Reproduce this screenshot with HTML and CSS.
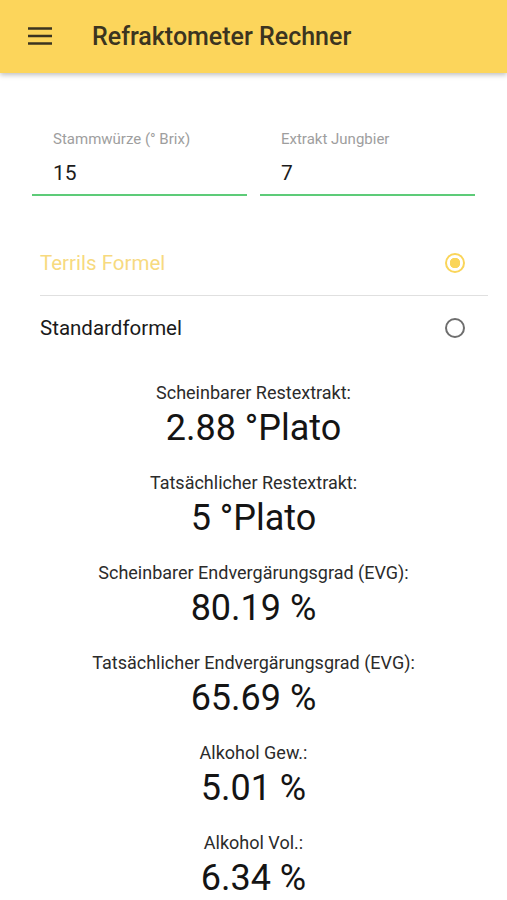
FILE: index.html
```html
<!DOCTYPE html>
<html lang="de">
<head>
    <meta charset="utf-8">
    <title>Refraktometer Rechner</title>
    <link rel="stylesheet" href="styles.css">
</head>
<body>
    <header class="toolbar">
        <svg class="menuIcon" width="24" height="24" viewBox="0 0 24 24">
            <path d="M0 4.5h24M0 12h24M0 19.5h24" stroke="#3b3420" stroke-width="2.6"/>
        </svg>
        <h1>Refraktometer Rechner</h1>
    </header>

    <main>
        <div class="inputs">
            <label class="field">
                <span class="fieldLabel">Stammwürze (° Brix)</span>
                <span class="fieldValue">15</span>
            </label>
            <label class="field">
                <span class="fieldLabel">Extrakt Jungbier</span>
                <span class="fieldValue">7</span>
            </label>
        </div>

        <ul class="formulas">
            <li class="formula checked">
                <span>Terrils Formel</span>
                <span class="radio"></span>
            </li>
            <li class="formula">
                <span>Standardformel</span>
                <span class="radio"></span>
            </li>
        </ul>

        <section class="results">
            <div class="result">
                <p class="resultLabel">Scheinbarer Restextrakt:</p>
                <p class="resultValue">2.88 °Plato</p>
            </div>
            <div class="result">
                <p class="resultLabel">Tatsächlicher Restextrakt:</p>
                <p class="resultValue">5 °Plato</p>
            </div>
            <div class="result">
                <p class="resultLabel">Scheinbarer Endvergärungsgrad (EVG):</p>
                <p class="resultValue">80.19 %</p>
            </div>
            <div class="result">
                <p class="resultLabel">Tatsächlicher Endvergärungsgrad (EVG):</p>
                <p class="resultValue">65.69 %</p>
            </div>
            <div class="result">
                <p class="resultLabel">Alkohol Gew.:</p>
                <p class="resultValue">5.01 %</p>
            </div>
            <div class="result">
                <p class="resultLabel">Alkohol Vol.:</p>
                <p class="resultValue">6.34 %</p>
            </div>
        </section>
    </main>
</body>
</html>
```

FILE: styles.css
```css
* {
    box-sizing: border-box;
    margin: 0;
    padding: 0;
}

body {
    font-family: Roboto, "Noto Sans", sans-serif;
    background-color: white;
    color: #1a1a1a;
    overflow: hidden;
}

.toolbar {
    height: 73px;
    display: flex;
    align-items: center;
    padding-left: 28px;
    background-color: #fcd55b;
    box-shadow: 0 2px 5px rgba(0, 0, 0, 0.25);
}

.menuIcon { margin: -2px 40px 0 0 }

.toolbar h1 {
    font-size: 25px;
    font-weight: 500;
    color: #3b3420;
}

main { padding: 52px 32px 0 }

.inputs {
    display: flex;
    gap: 13px;
}

.field {
    flex: 1;
    display: flex;
    flex-direction: column;
    padding: 5px 0 0 21px;
    border-bottom: 2px solid #5dcb78;
    height: 71px;
}

.fieldLabel {
    font-size: 15px;
    color: #9e9e9e;
}

.fieldValue {
    font-size: 21px;
    color: #1c1c1c;
    margin-top: 13px;
}

.formulas {
    list-style: none;
    margin: 35px -13px 0 8px;
}

.formula {
    display: flex;
    justify-content: space-between;
    align-items: center;
    height: 64px;
    padding-right: 23px;
    font-size: 20.5px;
}

.formula + .formula { border-top: 1px solid #e0e0e0 }

.formula.checked { color: #f7da7f }

.radio {
    width: 20px;
    height: 20px;
    border-radius: 50%;
    border: 2px solid #6e6e6e;
}

.checked .radio {
    border-color: #fad55a;
    background: radial-gradient(circle, #fad55a 0 5px, transparent 5.5px);
}

.results {
    margin-top: 23px;
    text-align: center;
}

.result { height: 90px }

.resultLabel {
    font-size: 18px;
    color: #2b2b2b;
}

.resultValue {
    font-size: 36px;
    line-height: 40px;
    margin-top: 5px;
    color: #141414;
}
```
